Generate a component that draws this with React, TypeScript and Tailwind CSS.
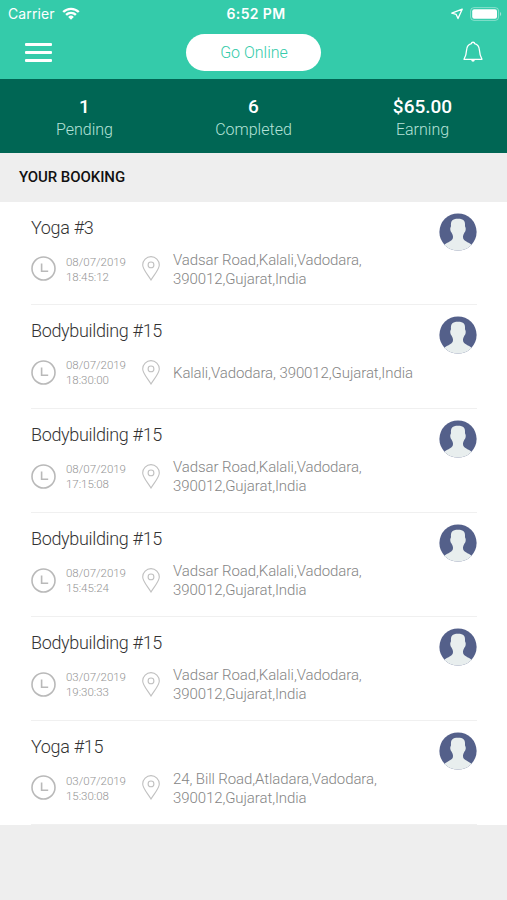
import React from "react";

type Booking = { title: string; date: string; time: string; address: string[] };

const vadsar = ["Vadsar Road,Kalali,Vadodara,", "390012,Gujarat,India"];

const bookings: Booking[] = [
  { title: "Yoga #3", date: "08/07/2019", time: "18:45:12", address: vadsar },
  { title: "Bodybuilding #15", date: "08/07/2019", time: "18:30:00", address: ["Kalali,Vadodara, 390012,Gujarat,India"] },
  { title: "Bodybuilding #15", date: "08/07/2019", time: "17:15:08", address: vadsar },
  { title: "Bodybuilding #15", date: "08/07/2019", time: "15:45:24", address: vadsar },
  { title: "Bodybuilding #15", date: "03/07/2019", time: "19:30:33", address: vadsar },
  { title: "Yoga #15", date: "03/07/2019", time: "15:30:08", address: ["24, Bill Road,Atladara,Vadodara,", "390012,Gujarat,India"] },
];

const stats = [
  { value: "1", label: "Pending" },
  { value: "6", label: "Completed" },
  { value: "$65.00", label: "Earning" },
];

function Wifi() {
  return (
    <svg className="ml-[7px] h-[13px] w-[18px]" viewBox="0 0 18 13" fill="none" stroke="white" strokeWidth="2.4">
      <path d="M1.2 5A11.2 11.2 0 0 1 16.8 5" />
      <path d="M4.1 7.9A7 7 0 0 1 13.9 7.9" />
      <path d="M9 12.7L6.2 9.9A4 4 0 0 1 11.8 9.9Z" fill="white" stroke="none" />
    </svg>
  );
}

function LocationArrow() {
  return (
    <svg className="h-3 w-3" viewBox="0 0 12 12" fill="none" stroke="white" strokeWidth="1.3" strokeLinejoin="round">
      <path d="M11.2 1.2L.8 5.2L5.2 6.4L7 10.6Z" />
    </svg>
  );
}

function Battery() {
  return (
    <svg className="ml-[7px] h-[14px] w-8" viewBox="0 0 32 14">
      <rect x="0.6" y="0.6" width="28" height="12.8" rx="3.4" fill="none" stroke="white" strokeOpacity="0.4" />
      <rect x="2.2" y="2.2" width="24.8" height="9.6" rx="2" fill="white" />
      <path d="M30 5C31.6 5.6 31.6 8.4 30 9Z" fill="white" fillOpacity="0.5" />
    </svg>
  );
}

function Bell() {
  return (
    <svg className="h-[22px] w-5" viewBox="0 0 20 22" fill="none" stroke="white" strokeWidth="1.3" strokeLinejoin="round">
      <path d="M8.4 2.6C8.4 .8 11.6 .8 11.6 2.6C14.8 3.5 16.3 6 16.4 9C16.6 13 17.4 15.3 19 18.3H1C2.6 15.3 3.4 13 3.6 9C3.7 6 5.2 3.5 8.4 2.6Z" />
      <path d="M8.2 18.8C8.2 21.3 11.8 21.3 11.8 18.8Z" fill="white" stroke="none" />
    </svg>
  );
}

function Clock() {
  return (
    <svg className="h-[25px] w-[25px] shrink-0" viewBox="0 0 25 25" fill="none" stroke="#b9b9b9" strokeWidth="1.6">
      <circle cx="12.5" cy="12.5" r="11.5" />
      <path d="M10.6 7.5V15.2H17.2" />
    </svg>
  );
}

function Pin() {
  return (
    <svg className="h-[25px] w-[18px] shrink-0" viewBox="0 0 18 25" fill="none" stroke="#c0c0c0" strokeWidth="1.1">
      <path d="M9 24C6.5 19.5 .7 13.3 .7 8.9A8.3 8.3 0 0 1 17.3 8.9C17.3 13.3 11.5 19.5 9 24Z" />
      <circle cx="9" cy="8.9" r="2.9" />
    </svg>
  );
}

function Avatar() {
  return (
    <svg className="h-[38px] w-[38px]" viewBox="0 0 38 38">
      <defs>
        <clipPath id="face">
          <circle cx="19" cy="19" r="18.6" />
        </clipPath>
      </defs>
      <g clipPath="url(#face)">
        <rect width="38" height="38" fill="#54608a" />
        <path d="M19 5.8C24.8 5.8 26.4 8.2 26 13C26 14.2 27.2 14.6 26.6 17.3C26.3 18.8 25.6 19.1 25 20.4C24.2 22 24 22.8 24 24C24 28.5 28.5 28 34 33V38H4V33C9.5 28 14 28.5 14 24C14 22.8 13.8 22 13 20.4C12.4 19.1 11.7 18.8 11.4 17.3C10.8 14.6 12 14.2 12 13C11.6 8.2 13.2 5.8 19 5.8Z" fill="#e8eeee" />
      </g>
    </svg>
  );
}

function BookingRow({ booking }: { booking: Booking }) {
  return (
    <li className="flex h-[103.9px] flex-col border-b border-[#f0f0f0]">
      <div className="flex h-12 justify-between">
        <h2 className="pt-[14px] text-[18px] leading-6 font-light tracking-[-0.34px] text-[#333]">{booking.title}</h2>
        <div className="pt-[11px]">
          <Avatar />
        </div>
      </div>
      <div className="flex h-[38px] items-center">
        <Clock />
        <div className="mt-[2px] ml-[10px] w-[76px] text-[11.5px] leading-[15px] font-light tracking-[-0.02px] text-[#949494]">
          <div>{booking.date}</div>
          <div>{booking.time}</div>
        </div>
        <Pin />
        <div className="mt-[2px] ml-[13px] text-[15px] leading-[19px] font-light tracking-[-0.09px] whitespace-nowrap text-[#858585]">
          {booking.address.map((line) => (
            <div key={line}>{line}</div>
          ))}
        </div>
      </div>
    </li>
  );
}

export default function App() {
  return (
    <div className="h-[900px] w-[507px] overflow-hidden bg-[#eee] font-[Roboto,sans-serif]">
      <header className="h-[79px] bg-[#34cbaa] text-white">
        <div className="grid h-[27px] grid-cols-3 items-center pr-[5px] pl-2 font-[Inter,sans-serif] text-[14px]">
          <div className="flex items-center">
            <span className="tracking-[0.1px]">Carrier</span>
            <Wifi />
          </div>
          <div className="pl-[2px] text-center font-semibold tracking-[0.35px]">6:52 PM</div>
          <div className="flex items-center justify-end">
            <LocationArrow />
            <Battery />
          </div>
        </div>
        <div className="grid h-[50px] grid-cols-3 items-center pr-6 pl-[25px]">
          <button className="flex w-[27px] flex-col gap-[5px]" aria-label="Menu">
            <span className="h-[3px] w-full rounded-[1px] bg-white" />
            <span className="h-[3px] w-full rounded-[1px] bg-white" />
            <span className="h-[3px] w-full rounded-[1px] bg-white" />
          </button>
          <button className="h-[37px] w-[135px] justify-self-center rounded-full bg-white pt-[2px] text-[16px] font-light text-[#34cbaa]">Go Online</button>
          <div className="justify-self-end">
            <Bell />
          </div>
        </div>
      </header>
      <section className="grid h-[73.5px] grid-cols-3 bg-[#006654] pt-4 text-center text-white">
        {stats.map((s) => (
          <div key={s.label}>
            <div className="text-[19px] leading-6 font-medium">{s.value}</div>
            <div className="text-[16px] leading-[22px] font-light text-[#b5e2d8]">{s.label}</div>
          </div>
        ))}
      </section>
      <h1 className="flex h-[49px] items-center pt-px pl-[19px] text-[15px] font-medium tracking-[-0.08px] text-[#111]">YOUR BOOKING</h1>
      <ul className="bg-white pr-[30px] pl-[31px]">
        {bookings.map((b, i) => (
          <BookingRow key={i} booking={b} />
        ))}
      </ul>
    </div>
  );
}
